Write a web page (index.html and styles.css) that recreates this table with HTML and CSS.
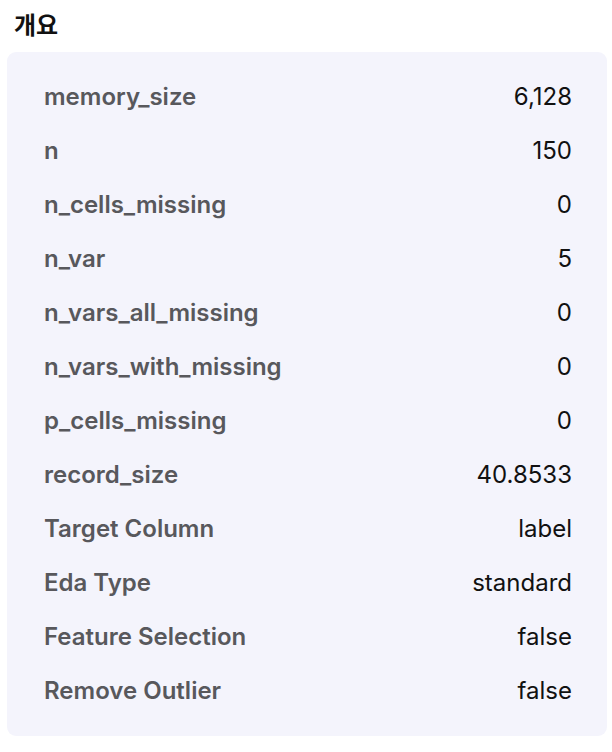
FILE: index.html
```html
<!DOCTYPE html>
<html lang="ko">
<head>
<meta charset="utf-8">
<link rel="stylesheet" href="styles.css">
</head>
<body>
<h2 class="title">개요</h2>
<div class="card">
  <div class="row"><span class="key">memory_size</span><span class="val">6,128</span></div>
  <div class="row"><span class="key">n</span><span class="val">150</span></div>
  <div class="row"><span class="key">n_cells_missing</span><span class="val">0</span></div>
  <div class="row"><span class="key">n_var</span><span class="val">5</span></div>
  <div class="row"><span class="key">n_vars_all_missing</span><span class="val">0</span></div>
  <div class="row"><span class="key">n_vars_with_missing</span><span class="val">0</span></div>
  <div class="row"><span class="key">p_cells_missing</span><span class="val">0</span></div>
  <div class="row"><span class="key">record_size</span><span class="val">40.8533</span></div>
  <div class="row"><span class="key">Target Column</span><span class="val">label</span></div>
  <div class="row"><span class="key">Eda Type</span><span class="val">standard</span></div>
  <div class="row"><span class="key">Feature Selection</span><span class="val">false</span></div>
  <div class="row"><span class="key">Remove Outlier</span><span class="val">false</span></div>
</div>
</body>
</html>
```
FILE: styles.css
```css
html, body {
  margin: 0;
  padding: 0;
  background: #ffffff;
}
body {
  font-family: Inter, "Noto Sans CJK KR", sans-serif;
  padding: 0 5px 0 7px;
}
.title {
  margin: 0;
  padding: 8px 0 0 7px;
  height: 52px;
  box-sizing: border-box;
  font-family: "Noto Sans CJK KR", sans-serif;
  font-size: 24px;
  font-weight: 700;
  color: #111;
  line-height: 32px;
}
.card {
  background: #f4f4fc;
  border-radius: 9px;
  padding: 17px 35px 19px 37px;
  box-sizing: border-box;
}
.row {
  display: flex;
  justify-content: space-between;
  align-items: center;
  height: 54px;
  font-size: 24px;
}
.key {
  font-weight: 600;
  color: #58585c;
}
.val {
  font-weight: 400;
  color: #111;
}
```
